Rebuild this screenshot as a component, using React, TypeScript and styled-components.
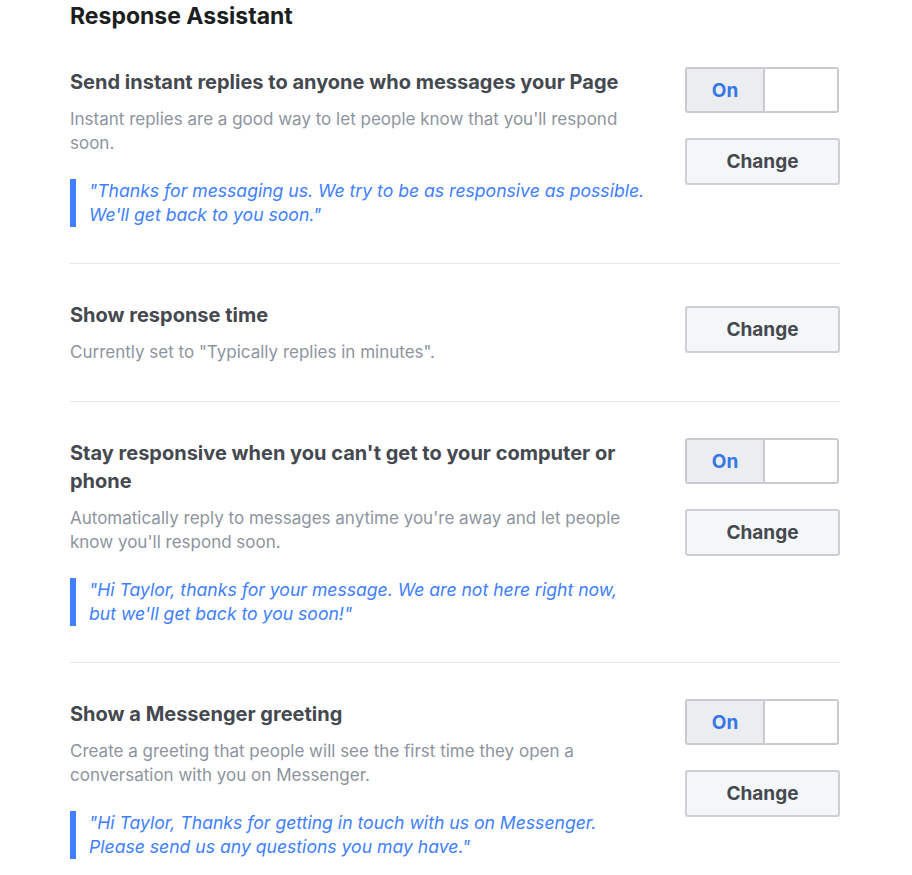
import React from "react";
import styled, { createGlobalStyle } from "styled-components";

const Global = createGlobalStyle`
  html, body { margin: 0; padding: 0; background: #ffffff; }
  body { font-family: Inter, "Noto Sans", Arial, sans-serif; -webkit-font-smoothing: antialiased; }
`;

const Page = styled.div`
  width: 770px;
  padding: 0 72px 0 70px;
`;

const Title = styled.h1`
  margin: 2px 0 0;
  font-size: 23px;
  line-height: 28px;
  font-weight: 700;
  color: #1c1e21;
`;

const Section = styled.section<{ $first?: boolean }>`
  display: grid;
  grid-template-columns: 1fr 155px;
  column-gap: 30px;
  align-items: start;
  padding: 37px 0 36px;
  border-top: ${(p) => (p.$first ? "none" : "1px solid #e4e6e9")};
  margin-top: ${(p) => (p.$first ? "1px" : "0")};
`;

const TextCol = styled.div`
  display: flex;
  flex-direction: column;
`;

const Heading = styled.h2`
  margin: 0;
  font-size: 20px;
  line-height: 28px;
  font-weight: 700;
  color: #444950;
`;

const Description = styled.p`
  margin: 11px 0 1px;
  font-size: 17px;
  line-height: 24px;
  color: #8d949e;
`;

const Quote = styled.blockquote`
  margin: 23px 0 0;
  padding-left: 13px;
  border-left: 6px solid #4080ff;
  font-size: 17.6px;
  line-height: 24px;
  font-style: italic;
  color: #4080ff;
`;

const Controls = styled.div`
  display: flex;
  flex-direction: column;
  align-items: flex-start;
`;

const Toggle = styled.div`
  display: flex;
  width: 154px;
  height: 46px;
  box-sizing: border-box;
  margin-top: -1px;
  margin-bottom: 20px;
  border: 2px solid #c9cbce;
  border-radius: 3px;
  overflow: hidden;
  background: #ffffff;
`;

const ToggleOn = styled.div`
  width: 76px;
  display: flex;
  align-items: center;
  justify-content: center;
  background: #ebedf0;
  border-right: 2px solid #c9cbce;
  font-size: 19px;
  font-weight: 700;
  color: #3578e5;
`;

const ToggleOff = styled.div`
  flex: 1;
  background: #ffffff;
`;

const ChangeButton = styled.button`
  width: 155px;
  height: 47px;
  margin-top: 5px;
  box-sizing: border-box;
  border: 2px solid #ccd0d5;
  border-radius: 3px;
  background: #f5f6f7;
  font-family: inherit;
  font-size: 19px;
  font-weight: 700;
  color: #444950;
  cursor: pointer;
`;

type Item = {
  heading: string;
  description: string;
  quote?: string[];
  toggle: boolean;
};

const items: Item[] = [
  {
    heading: "Send instant replies to anyone who messages your Page",
    description: "Instant replies are a good way to let people know that you'll respond soon.",
    quote: [
      "\"Thanks for messaging us. We try to be as responsive as possible.",
      "We'll get back to you soon.\"",
    ],
    toggle: true,
  },
  {
    heading: "Show response time",
    description: "Currently set to \"Typically replies in minutes\".",
    toggle: false,
  },
  {
    heading: "Stay responsive when you can't get to your computer or phone",
    description:
      "Automatically reply to messages anytime you're away and let people know you'll respond soon.",
    quote: [
      "\"Hi Taylor, thanks for your message. We are not here right now,",
      "but we'll get back to you soon!\"",
    ],
    toggle: true,
  },
  {
    heading: "Show a Messenger greeting",
    description:
      "Create a greeting that people will see the first time they open a conversation with you on Messenger.",
    quote: [
      "\"Hi Taylor, Thanks for getting in touch with us on Messenger.",
      "Please send us any questions you may have.\"",
    ],
    toggle: true,
  },
];

export default function App() {
  return (
    <>
      <Global />
      <Page>
        <Title>Response Assistant</Title>
        {items.map((it, i) => (
          <Section key={i} $first={i === 0}>
            <TextCol>
              <Heading>{it.heading}</Heading>
              <Description>{it.description}</Description>
              {it.quote && (
                <Quote>
                  {it.quote.map((l, j) => (
                    <React.Fragment key={j}>
                      {l}
                      {j < it.quote!.length - 1 && <br />}
                    </React.Fragment>
                  ))}
                </Quote>
              )}
            </TextCol>
            <Controls>
              {it.toggle && (
                <Toggle>
                  <ToggleOn>On</ToggleOn>
                  <ToggleOff />
                </Toggle>
              )}
              <ChangeButton type="button">Change</ChangeButton>
            </Controls>
          </Section>
        ))}
      </Page>
    </>
  );
}
